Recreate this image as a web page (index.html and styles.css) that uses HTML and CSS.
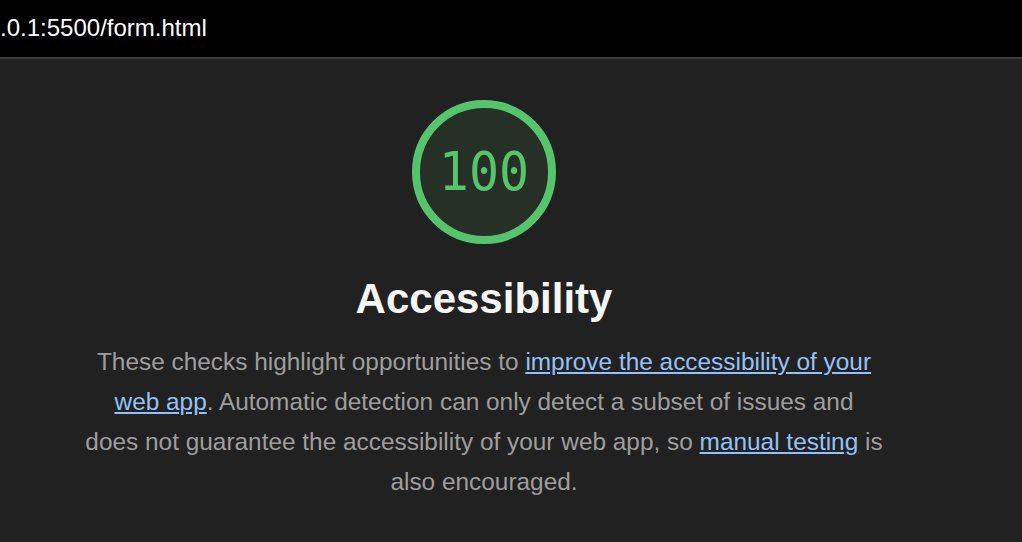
FILE: index.html
```html
<!DOCTYPE html>
<html lang="en">
<head>
<meta charset="utf-8">
<title>Accessibility</title>
<link rel="stylesheet" href="styles.css">
</head>
<body>
<header class="urlbar"><span class="url">127.0.0.1:5500/form.html</span></header>
<main class="report">
  <div class="gauge">
    <svg class="gauge-ring" width="144" height="144" viewBox="0 0 144 144">
      <circle cx="72" cy="72" r="68" fill="#263027" stroke="#55c46c" stroke-width="8"/>
    </svg>
    <span class="score">100</span>
  </div>
  <h1 class="title">Accessibility</h1>
  <p class="desc">These checks highlight opportunities to <a href="#">improve the accessibility of your web app</a>. Automatic detection can only detect a subset of issues and<br>does not guarantee the accessibility of your web app, so <a href="#">manual testing</a> is also encouraged.</p>
</main>
</body>
</html>
```
FILE: styles.css
```css
html, body {
  margin: 0;
  padding: 0;
  background: #212121;
  height: 100%;
  overflow: hidden;
}
body {
  font-family: "Liberation Sans", Arial, sans-serif;
}
.urlbar {
  height: 57px;
  background: #000;
  border-bottom: 2px solid #3a3a3a;
  display: flex;
  align-items: center;
  overflow: hidden;
}
.url {
  color: #fff;
  font-size: 24px;
  margin-left: -60px;
  white-space: nowrap;
  margin-top: -1px;
}
.report {
  width: 810px;
  margin-left: 79px;
  display: flex;
  flex-direction: column;
  align-items: center;
  padding-top: 41px;
}
.gauge {
  position: relative;
  width: 144px;
  height: 144px;
}
.gauge-ring {
  display: block;
}
.score {
  position: absolute;
  inset: 0;
  display: flex;
  align-items: center;
  justify-content: center;
  font-family: "DejaVu Sans Mono", monospace;
  font-size: 50px;
  color: #55c46c;
  transform: scaleY(1.08);
}
.title {
  margin: 30px 0 0;
  font-size: 42px;
  font-weight: bold;
  color: #f5f5f5;
  line-height: 50px;
}
.desc {
  margin: 18px 0 0;
  text-align: center;
  font-size: 24.4px;
  line-height: 40px;
  color: #9e9e9e;
}
.desc a {
  color: #94c2f8;
  text-decoration: underline;
}
```
